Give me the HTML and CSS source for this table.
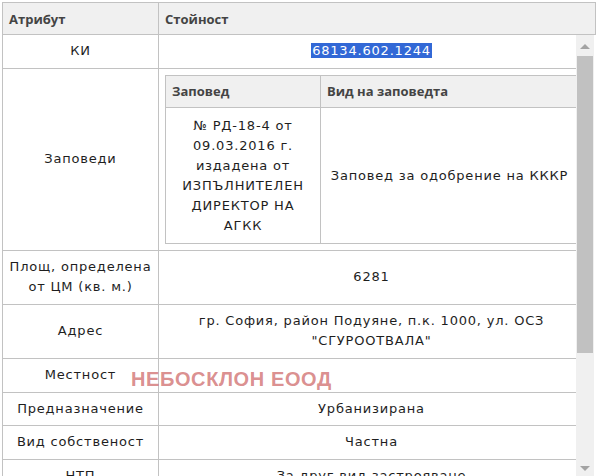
FILE: index.html
```html
<!DOCTYPE html>
<html lang="bg">
<head>
<meta charset="utf-8">
<title>Атрибути</title>
<link rel="stylesheet" href="styles.css">
</head>
<body>
<div class="grid">
  <table class="head">
    <colgroup><col class="c1"><col></colgroup>
    <tr><th>Атрибут</th><th>Стойност</th></tr>
  </table>
  <div class="body">
    <div class="viewport">
      <table class="data">
        <colgroup><col class="c1"><col></colgroup>
        <tr><td>КИ</td><td><span class="sel">68134.602.1244</span></td></tr>
        <tr>
          <td>Заповеди</td>
          <td class="nested-cell">
            <table class="inner">
              <colgroup><col class="i1"><col></colgroup>
              <tr><th>Заповед</th><th>Вид на заповедта</th></tr>
              <tr>
                <td>№ РД-18-4 от 09.03.2016 г. издадена от ИЗПЪЛНИТЕЛЕН ДИРЕКТОР НА АГКК</td>
                <td>Заповед за одобрение на КККР</td>
              </tr>
            </table>
          </td>
        </tr>
        <tr><td>Площ, определена от ЦМ (кв. м.)</td><td>6281</td></tr>
        <tr><td>Адрес</td><td>гр. София, район Подуяне, п.к. 1000, ул. ОСЗ "СГУРООТВАЛА"</td></tr>
        <tr><td>Местност</td><td></td></tr>
        <tr><td>Предназначение</td><td>Урбанизирана</td></tr>
        <tr><td>Вид собственост</td><td>Частна</td></tr>
        <tr><td>НТП</td><td>За друг вид застрояване</td></tr>
      </table>
      <div class="watermark">НЕБОСКЛОН ЕООД</div>
    </div>
    <div class="scrollbar">
      <div class="arrow up"></div>
      <div class="track"><div class="thumb"></div></div>
      <div class="arrow down"></div>
    </div>
  </div>
</div>
</body>
</html>
```
FILE: styles.css
```css
html, body {
  margin: 0;
  padding: 0;
  background: #fff;
}
body {
  padding: 2px 0 0 2px;
  overflow: hidden;
  height: 476px;
  box-sizing: border-box;
}
.grid {
  width: 594px;
  font-family: "DejaVu Sans", Verdana, sans-serif;
  font-size: 13px;
  color: #1e1e1e;
}
table {
  border-collapse: collapse;
  table-layout: fixed;
}
.head {
  width: 594px;
  border: 1px solid #c2c2c2;
  background: #f0f0f0;
}
.head th {
  font-family: "Open Sans", sans-serif;
  font-weight: 700;
  font-size: 13px;
  color: #444;
  text-align: left;
  height: 31px;
  padding: 0 6px;
  border-left: 1px solid #c2c2c2;
}
col.c1 { width: 156px; }
.body {
  display: flex;
  height: 442px;
}
.viewport {
  position: relative;
  width: 574px;
  overflow: hidden;
}
.data {
  width: 583px;
  border-left: 1px solid #c2c2c2;
}
.data > tbody > tr > td {
  border: 1px solid #c2c2c2;
  border-top: 0;
  text-align: center;
  vertical-align: middle;
  padding: 6px;
  line-height: 20.6px;
  letter-spacing: 0.8px;
}
.data > tbody > tr > td.nested-cell {
  padding: 6px;
  text-align: left;
}
.sel {
  background: #3268d6;
  color: #fff;
  padding: 0 1px;
}
.inner {
  width: 414px;
  border: 1px solid #c2c2c2;
}
col.i1 { width: 155px; }
.inner th {
  font-family: "Open Sans", sans-serif;
  font-weight: 700;
  font-size: 13px;
  letter-spacing: 0;
  color: #444;
  text-align: left;
  background: #f0f0f0;
  height: 31px;
  padding: 0 6px;
  border: 1px solid #c2c2c2;
}
.inner td {
  border: 1px solid #c2c2c2;
  text-align: center;
  vertical-align: middle;
  padding: 8px 8px 7px;
  line-height: 20px;
}
.watermark {
  position: absolute;
  left: 129px;
  top: 333px;
  font-family: "Liberation Sans", Arial, sans-serif;
  font-weight: 700;
  font-size: 20px;
  letter-spacing: 0.6px;
  color: rgba(196, 70, 70, 0.62);
  white-space: nowrap;
  pointer-events: none;
}
.scrollbar {
  width: 18px;
  background: #f0f0f0;
  display: flex;
  flex-direction: column;
  align-items: center;
}
.arrow {
  width: 0;
  height: 0;
  border-left: 5px solid transparent;
  border-right: 5px solid transparent;
}
.arrow.up {
  margin: 9px 0 7px;
  border-bottom: 5px solid #a3a3a3;
}
.arrow.down {
  margin: 7px 0 6px;
  border-top: 5px solid #a3a3a3;
}
.track {
  flex: 1;
  width: 100%;
  display: flex;
  justify-content: center;
}
.thumb {
  width: 16px;
  height: 297px;
  background: #c1c1c1;
}
```
